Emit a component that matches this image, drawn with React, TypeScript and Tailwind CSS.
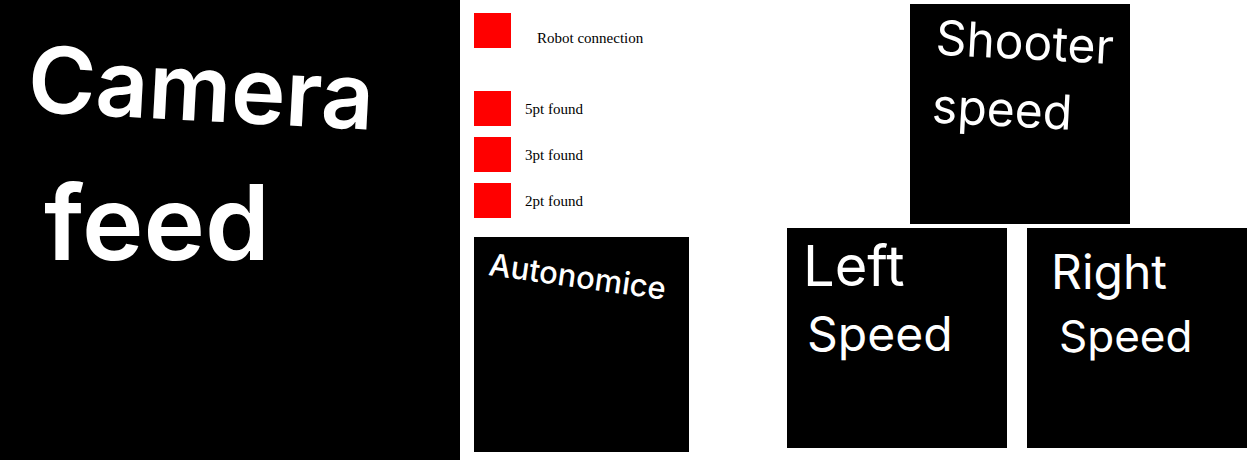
import React from "react";

type Status = { label: string };

const targets: Status[] = [
  { label: "5pt found" },
  { label: "3pt found" },
  { label: "2pt found" },
];

function StatusLight() {
  return <span aria-hidden="true" className="h-[35px] w-[37px] shrink-0 bg-[#ff0000]" />;
}

function SpeedPanel({ title, className }: { title: React.ReactNode; className: string }) {
  return (
    <section className="aspect-square min-w-0 bg-black text-white">
      <h2 className={className}>{title}</h2>
    </section>
  );
}

export default function App() {
  return (
    <main className="flex items-start bg-white font-['Inter',sans-serif]">
      <section className="aspect-square min-w-0 flex-[460] bg-black text-white">
        <h1 className="pt-6 pl-7 text-[92px] leading-[132px] font-semibold">
          <span className="block rotate-3">Camera</span>
          <span className="block pl-4 text-[104px]">feed</span>
        </h1>
      </section>

      <div className="ml-3.5 min-w-0 flex-[215] pt-[13px]">
        <div className="font-['Liberation_Serif',serif] text-[15px] leading-5 text-black">
          <div className="flex items-end gap-[26px] whitespace-nowrap">
            <StatusLight />
            <span>Robot connection</span>
          </div>
          <ul className="mt-[43px] flex flex-col gap-[11px]">
            {targets.map((target) => (
              <li key={target.label} className="flex items-center gap-3.5">
                <StatusLight />
                <span>{target.label}</span>
              </li>
            ))}
          </ul>
        </div>
        <section className="mt-[19px] aspect-square bg-black text-white">
          <h2 className="rotate-8 pt-6 pl-4 text-[31px] leading-8 font-medium">Autonomice</h2>
        </section>
      </div>

      <div className="mr-[13px] ml-[98px] grid min-w-0 flex-[460] grid-cols-2 gap-x-5 gap-y-1 pt-1">
        <div className="col-span-2 flex justify-center">
          <div className="w-[calc(50%-10px)] translate-x-[3px]">
            <SpeedPanel
              className="rotate-3 pt-1 pl-6 text-[48px] leading-[68px]"
              title={<>Shooter<br />speed</>}
            />
          </div>
        </div>
        <SpeedPanel
          className="pt-1 pl-4 text-[48px] leading-[68px]"
          title={
            <>
              <span className="block text-[56px]">Left</span>
              <span className="block pl-1">Speed</span>
            </>
          }
        />
        <SpeedPanel
          className="pt-3 pl-6 text-[44px] leading-[64px]"
          title={
            <>
              <span className="block text-[48px]">Right</span>
              <span className="block pl-2">Speed</span>
            </>
          }
        />
      </div>
    </main>
  );
}
